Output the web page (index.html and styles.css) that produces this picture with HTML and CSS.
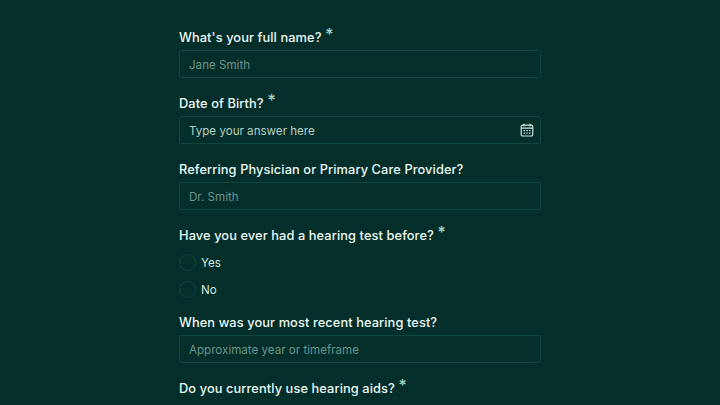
FILE: index.html
```html
<!DOCTYPE html>
<html lang="en">
<head>
  <meta charset="UTF-8" />
  <title>Patient Intake</title>
  <link rel="stylesheet" href="styles.css">
</head>
<body>
  <form class="form">
    <div class="field">
      <label class="label">What's your full name? <span class="req">*</span></label>
      <div class="input"><span class="placeholder">Jane Smith</span></div>
    </div>

    <div class="field">
      <label class="label">Date of Birth? <span class="req">*</span></label>
      <div class="input">
        <span class="value">Type your answer here</span>
        <svg class="calendar" width="14" height="14" viewBox="0 0 14 14" fill="none" stroke="#cfe6dd" stroke-width="1.2">
          <rect x="1.2" y="2.2" width="11.6" height="10.8" rx="1.6"/>
          <path d="M1.2 5.2h11.6M4 .8v2.6M10 .8v2.6"/>
          <path d="M3.6 7.6h1.4M6.3 7.6h1.4M9 7.6h1.4M3.6 10.2h1.4M6.3 10.2h1.4M9 10.2h1.4"/>
        </svg>
      </div>
    </div>

    <div class="field">
      <label class="label">Referring Physician or Primary Care Provider?</label>
      <div class="input"><span class="placeholder">Dr. Smith</span></div>
    </div>

    <div class="field">
      <label class="label">Have you ever had a hearing test before? <span class="req">*</span></label>
      <div class="radios">
        <div class="radio"><span class="circle"></span><span class="radio-text">Yes</span></div>
        <div class="radio"><span class="circle"></span><span class="radio-text">No</span></div>
      </div>
    </div>

    <div class="field">
      <label class="label">When was your most recent hearing test?</label>
      <div class="input"><span class="placeholder">Approximate year or timeframe</span></div>
    </div>

    <div class="field">
      <label class="label">Do you currently use hearing aids? <span class="req">*</span></label>
    </div>
  </form>
</body>
</html>
```

FILE: styles.css
```css
* {
  padding: 0;
  margin: 0;
  box-sizing: border-box;
}

body {
  width: 720px;
  height: 405px;
  overflow: hidden;
  background: #042e2a;
  font-family: "Inter", "Noto Sans", sans-serif;
  color: #ecf8f3;
}

.form {
  width: 362px;
  margin: 0 auto;
  padding-top: 28px;
  display: flex;
  flex-direction: column;
  gap: 16px;
}

.field {
  display: flex;
  flex-direction: column;
  gap: 3px;
}

.label {
  display: block;
  height: 19px;
  font-size: 12.8px;
  line-height: 19px;
  font-weight: 500;
  letter-spacing: 0.1px;
  white-space: nowrap;
}

.req {
  font-size: 16px;
  line-height: 0;
  font-weight: 600;
  color: #9fd0be;
  vertical-align: 2px;
}

.input {
  height: 28px;
  display: flex;
  align-items: center;
  justify-content: space-between;
  padding: 1px 6px 0 9px;
  border: 1px solid #0f4640;
  border-radius: 2px;
  font-size: 11.6px;
}

.placeholder {
  color: #6b958a;
}

.value {
  color: #b5cfc6;
}

.calendar {
  margin-top: -1px;
}

.radios {
  display: flex;
  flex-direction: column;
  gap: 9px;
  padding-top: 5px;
  margin-bottom: -1px;
}

.radio {
  display: flex;
  align-items: center;
  gap: 5px;
  height: 18px;
  font-size: 11.6px;
  color: #d5e8e0;
}

.radio-text {
  padding-top: 1px;
}

.circle {
  width: 17px;
  height: 17px;
  border: 1px solid #0f4640;
  border-radius: 50%;
}
```
